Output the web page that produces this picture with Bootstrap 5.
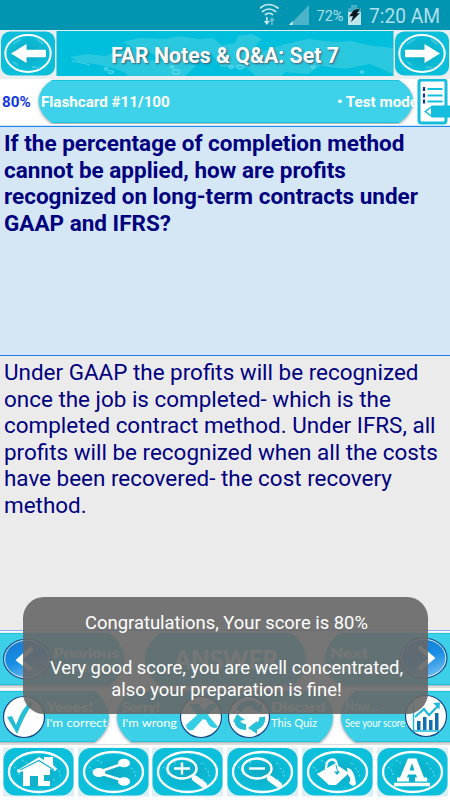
<!DOCTYPE html>
<html lang="en">
<head>
<meta charset="utf-8">
<meta name="viewport" content="width=device-width, initial-scale=1">
<title>FAR Notes &amp; Q&amp;A</title>
<link href="https://cdn.jsdelivr.net/npm/bootstrap@5.3.0/dist/css/bootstrap.min.css" rel="stylesheet">
<style>
body{font-family:Roboto,"Liberation Sans",sans-serif;width:450px;height:800px;overflow:hidden;background:#fff}
.phone{width:450px;height:800px}
svg{display:block;flex:none}
svg text{font-family:Lato,"Open Sans",sans-serif}
.status-bar{height:30px;background:#0295b2;color:#b5dfe8}
.title-bar{height:49px;background:#e9eef0;padding:1px 1px 3px}
.title-box{width:338px;height:45px;background:#00bfdc;border-left:1px solid #8fcbd6;border-right:1px solid #8fcbd6}
.title-text{font-size:21.3px;text-shadow:1px 1px 2px #456}
.info-bar{height:48px;border-bottom:1px solid #1e88f5;box-shadow:inset 0 -1px #d7e5f4}
.info-text{font-size:15.2px;line-height:47px}
.pct{width:41px;padding-left:2px;color:#1238e0}
.mode-text{margin-right:32px}
.q-pane{height:229px;background:#d5e7f5;border-bottom:1px solid #1b82e0;color:#00007f;font-size:22.5px;line-height:26.6px;padding:3px 4px}
.a-pane{height:274px;background:#ebebeb;color:#00007f;font-size:22.45px;line-height:26.6px;padding:3px 4px}
.dock{height:54px;background:#fff}
.toast-box{left:23px;top:597px;width:405px;height:117px;border-radius:21px;background:rgba(103,103,103,.9);color:#fff;font-size:18.4px;line-height:22.3px;padding:15px 0 0 2px}
.ln{display:block;white-space:nowrap}
</style>
<script src="https://cdn.jsdelivr.net/npm/bootstrap@5.3.0/dist/js/bootstrap.bundle.min.js"></script>
</head>
<body>
<svg width="0" height="0" class="position-absolute">
  <defs>
    <radialGradient id="sea"><stop offset="0" stop-color="#0fa9c4"/><stop offset="1" stop-color="#09bfda"/></radialGradient>
    <linearGradient id="ball" x1="0" y1="0" x2=".4" y2="1"><stop offset="0" stop-color="#1577d3"/><stop offset=".6" stop-color="#178ee4"/><stop offset="1" stop-color="#62b4f0"/></linearGradient>
    <filter id="sh" x="-5%" y="-10%" width="110%" height="125%"><feDropShadow dx="0" dy="1" stdDeviation="1.8" flood-color="#555" flood-opacity=".65"/></filter>
    <g id="tile">
      <rect x="3" y="1.5" width="71" height="49" fill="#dceff5"/>
      <rect x="3.5" y="2" width="70" height="47.5" rx="12" fill="#0cc0dc"/>
      <ellipse cx="38.5" cy="26" rx="29.5" ry="20" fill="url(#sea)" stroke="#fff" stroke-width="2.3"/>
      <path d="M14 21l3 2 2 5 2 1M56 22l3 3 2 7M52 17l4 2M22 14l5 3M53 33l3 2" fill="none" stroke="#5bd3e7" stroke-width="1.3" stroke-dasharray="2 2"/>
    </g>
    <g id="navtile">
      <rect x="0" y=".5" width="54" height="44" rx="9" fill="#0bbfdb"/>
      <ellipse cx="27" cy="22.5" rx="22.7" ry="18.5" fill="url(#sea)" stroke="#fff" stroke-width="2"/>
      <path d="M12 13l8-5M36 8l6 5M31 36l8 1M12 31l5 3" stroke="#3cc7dd" stroke-width="2" fill="none"/>
    </g>
  </defs>
</svg>

<main class="phone d-flex flex-column position-relative">
  <header class="status-bar d-flex align-items-center justify-content-end">
    <svg width="190" height="30" viewBox="260 0 190 30">
      <g fill="none" stroke="#c5e8ef" stroke-width="1.7" stroke-linecap="round">
        <path d="M260 8q8.500-7 18 0M262.500 11.500q6.500-5 13 0M265.500 14.500q3.500-2.500 7 0"/>
      </g>
      <path d="M266 17v4h-2.200l3 4 3-4h-2.200v-4z" fill="#c5e8ef"/><path d="M271 25v-4h-2l3-4 3 4h-2.200v4z" fill="#69bccd"/>
      <path d="M309 5v20h-19.500z" fill="#4bb4c8"/><path d="M292.500 21v4h-3.500z" fill="#d7f1f6"/>
      <text x="316.500" y="20.500" font-size="15.500" fill="#b0dfe9" textLength="27" lengthAdjust="spacingAndGlyphs" style="font-family:Roboto">72%</text>
      <path d="M348 8h3V5.500h6V8h4v17h-13z" fill="#bfe4ec"/><path d="M348 8h3V5.500h6V8h4v4h-13z" fill="#3faec5"/>
      <path d="M354 10l6-1.500-3 5 3-.5-9 9 2-6-4 .5z" fill="#071a20"/>
      <text x="369" y="23" font-size="20.500" fill="#b0dfe9" textLength="71" lengthAdjust="spacingAndGlyphs" style="font-family:Roboto">7:20 AM</text>
    </svg>
  </header>

  <nav class="title-bar d-flex align-items-center">
    <svg width="55" height="45" viewBox="0 0 55 45"><use href="#navtile"/><path d="M10 22.500L25.500 13v5.800h18.500q1 0 1 1v5.400q0 1-1 1H25.500V32z" fill="#fff"/></svg>
    <div class="title-box position-relative d-flex align-items-center justify-content-center">
      <svg class="position-absolute top-0 start-0" width="336" height="45" viewBox="0 0 336 45">
        <g fill="#29c8df">
          <path d="M13 26l18-3 18 2 9-4 18-3 7 7 7 12 7 2-6 6H74l-10-5-12-4-14-3-16-2z"/>
          <path d="M66 11l16-4 25 1 16-3 18 3 15-1 11 9-15 7-14 2-7 9-23-4-18-10-11-1z"/>
          <path d="M154 22l7-7 17-3 3-7 14-2 10 5-7 7 9 5 22-7 22-5 28 3 15-1 16 4 26 3v26l-23-10-25 5-25-3-12 8-23-2-6 7h-20l-12-11-26-1z"/>
          <path d="M70 27l40 4 30 3-12 11H70z"/>
        </g>
        <path d="M15 30l10 2 8 2" stroke="#5ad5e7" stroke-width=".8" fill="none"/>
        <g fill="none" stroke="#7ee0ed" stroke-width=".9"><ellipse cx="49" cy="38" rx="2" ry="1.300"/><ellipse cx="54" cy="41" rx="2.500" ry="1.500"/><ellipse cx="119" cy="41" rx="4" ry="2.300"/><ellipse cx="115" cy="36" rx="2" ry="1.200"/><ellipse cx="183" cy="36" rx="3.500" ry="2"/><ellipse cx="174" cy="36" rx="2" ry="1.500"/><ellipse cx="256" cy="36" rx="2" ry="1.200"/><ellipse cx="305" cy="41" rx="2" ry="1.200"/></g>
      </svg>
      <h1 class="title-text position-relative m-0 pt-1 fw-bold text-white text-nowrap">FAR Notes &amp; Q&amp;A: Set 7</h1>
    </div>
    <svg width="55" height="45" viewBox="0 0 55 45"><use href="#navtile" x="1"/><path d="M46 22.500L30.500 13v5.800H12q-1 0-1 1v5.400q0 1 1 1h18.500V32z" fill="#fff"/></svg>
  </nav>

  <section class="info-bar info-text d-flex position-relative fw-bold">
    <svg class="position-absolute top-0 start-0" width="450" height="45" viewBox="0 0 450 45"><path d="M52 1H399Q412 9 413.500 22Q412 35 399 44H52Q39 35 38.500 22Q39 9 52 1Z" fill="#3dd2e9" filter="url(#sh)"/><path d="M52 1.500H399M52 43.500H399" stroke="#17c6e1"/></svg>
    <span class="pct position-relative">80%</span>
    <span class="position-relative text-white">Flashcard #11/100</span>
    <span class="mode-text position-relative text-white ms-auto">• Test mode</span>
    <svg class="position-absolute top-0 end-0" width="34" height="46" viewBox="416 79 34 46">
      <rect x="419" y="80" width="27" height="43" rx="2.500" fill="#fff" stroke="#14bedc" stroke-width="3"/>
      <path d="M427.500 89h15M427.500 95.500h15M427.500 101.500h15" stroke="#13bfdd" stroke-width="2"/>
      <path d="M424 87v4M424 93.500v4M424 99.500v4" stroke="#15338d" stroke-width="2.200"/>
      <path d="M424 111.500l8-6h18v12h-18z" fill="#14bedc"/><path d="M426.500 111.500l4.500-3.500v7z" fill="#fff"/>
    </svg>
  </section>

  <section class="q-pane fw-bold">
    <span class="ln">If the percentage of completion method</span><span class="ln">cannot be applied, how are profits</span><span class="ln">recognized on long-term contracts under</span><span class="ln">GAAP and IFRS?</span>
  </section>

  <section class="a-pane">
    <span class="ln">Under GAAP the profits will be recognized</span><span class="ln">once the job is completed- which is the</span><span class="ln">completed contract method. Under IFRS, all</span><span class="ln">profits will be recognized when all the costs</span><span class="ln">have been recovered- the cost recovery</span><span class="ln">method.</span>
  </section>

  <svg width="450" height="116" viewBox="0 630 450 116">
    <rect y="630" width="450" height="116" fill="#fff"/>
    <rect y="629" width="450" height="2" fill="#82acf5"/>
    <g fill="#3bd0e7" filter="url(#sh)">
      <path d="M-6 633H109Q124 645 124 659Q124 674 109 685H-6z"/>
      <path d="M160 633H292Q306 645 306 659Q306 674 292 685H160Q145 674 145 659Q145 645 160 633z"/>
      <path d="M456 633H340Q325 645 325 659Q325 674 340 685H456z"/>
      <path d="M-6 691H95Q109 703 109 717Q109 731 95 742H-6z"/>
      <path d="M131 691H320Q333 703 333 717Q333 731 320 742H131Q117 731 117 717Q117 703 131 691z"/>
      <path d="M456 691H355Q341 703 341 717Q341 731 355 742H456z"/>
    </g>
    <path d="M0 633.500H109M340 633.500H450M0 684.500H109M340 684.500H450M0 691.500H95M131 691.500H320M355 691.500H450M0 741.500H95M131 741.500H320M355 741.500H450" stroke="#18c6e2"/>
    <path d="M0 687.500H450M0 744.500H450" stroke="#d9dfe1"/>
    <path d="M225.500 691v51" stroke="#33cbe3"/>
    <g fill="#fff" font-weight="900">
      <text x="53" y="658" font-size="13.500" textLength="66" lengthAdjust="spacingAndGlyphs">Previous</text><text x="62" y="672" font-size="11" font-weight="400" textLength="52">Flashcard</text>
      <text x="174" y="669" font-size="26" textLength="104" lengthAdjust="spacingAndGlyphs">ANSWER</text>
      <text x="330" y="658" font-size="13.500" textLength="38" lengthAdjust="spacingAndGlyphs">Next</text><text x="330" y="672" font-size="11" font-weight="400" textLength="49">Flashcard</text>
      <text x="46" y="712" font-size="13.500" textLength="47" lengthAdjust="spacingAndGlyphs">Yeees!</text>
      <text x="122" y="712" font-size="13.500" textLength="38" lengthAdjust="spacingAndGlyphs">Sorry!</text>
      <text x="271" y="712" font-size="13.500" textLength="54" lengthAdjust="spacingAndGlyphs">Discard</text>
      <text x="345" y="711" font-size="13" font-weight="400" textLength="33" lengthAdjust="spacingAndGlyphs">Now...</text>
      <g font-weight="400" font-size="11.800">
        <text x="46" y="727" textLength="61" lengthAdjust="spacingAndGlyphs">I'm correct</text>
        <text x="122" y="727" textLength="55" lengthAdjust="spacingAndGlyphs">I'm wrong</text>
        <text x="271" y="727" textLength="46" lengthAdjust="spacingAndGlyphs">This Quiz</text>
        <text x="345" y="727" textLength="60" lengthAdjust="spacingAndGlyphs">See your score</text>
      </g>
    </g>
    <g fill="url(#ball)" stroke="#1b4f91" stroke-width="1.200"><ellipse cx="27" cy="659" rx="23.500" ry="20"/><ellipse cx="423.500" cy="658" rx="23.500" ry="20"/></g>
    <g fill="none" stroke="#d9edf9" stroke-width="1"><ellipse cx="27" cy="659" rx="22.300" ry="18.800"/><ellipse cx="423.500" cy="658" rx="22.300" ry="18.800"/></g>
    <path d="M32 648L19 660L32 670M419 647L432 658L419 669" fill="none" stroke="#fff" stroke-width="4.500"/>
    <g fill="#fff" stroke="#17468a" stroke-width="1.200"><circle cx="24" cy="717" r="20.500"/><circle cx="201" cy="717" r="20.500"/><circle cx="249" cy="717" r="20.500"/><circle cx="426" cy="716" r="20.500"/></g>
    <path d="M7 717l5-1 4 9q6-17 15-24l2 2q-9 13-16 31z" fill="#23bdd5"/>
    <path d="M186 725l11-10-8-11h10l5 6 6-6h9l-11 11 10 12q-7 4-12-7l-3-1-10 11q-6 2-7-5z" fill="#35cde4"/>
    <g fill="none" stroke="#27c1d8" stroke-width="6">
      <path d="M239 711q3-7 10-8 5 0 7 3M246 727q-8 0-9-7M262 717q1 7-6 10"/>
    </g>
    <path d="M251 709l11-6v10zM233 722l4-8 8 6zM257 721v13l-9-6z" fill="#27c1d8"/>
    <path d="M413.500 702v29h27" fill="none" stroke="#19b9db" stroke-width="1.400"/>
    <path d="M417 721h3.500v9H417zM423 717h3.500v13H423zM429 720h3.500v10H429zM435 713h3.500v17H435z" fill="#126fae"/>
    <path d="M415 717l9-8 5 6 9-9" fill="none" stroke="#21b8da" stroke-width="2.200"/><path d="M433 703l7-.5-.5 7z" fill="#21b8da"/>
  </svg>

  <footer class="dock d-flex">
    <svg width="75" height="54" viewBox="0 0 75 54"><use href="#tile"/><path d="M17 24.500L39 11l5 3v-3h9v8l4 4-2 2-5-2v17H23V25l-5 2z" fill="#fff"/><path d="M20 24L39 14.500 54 24" fill="none" stroke="#12b1ca" stroke-width="1.200"/><path d="M30 30h8v11h-8zM44 29h8v6h-8z" fill="#12b1ca"/></svg>
    <svg width="75" height="54" viewBox="0 0 75 54"><use href="#tile"/><path d="M50 17L22 26.500 50 35" fill="none" stroke="#fff" stroke-width="2.500"/><g fill="#fff"><ellipse cx="49" cy="17" rx="6" ry="4.300"/><ellipse cx="24" cy="26.500" rx="6.300" ry="4.500"/><ellipse cx="49" cy="35.500" rx="6" ry="4.300"/></g></svg>
    <svg width="75" height="54" viewBox="0 0 75 54"><use href="#tile" x="-1"/><ellipse cx="32" cy="22.500" rx="14.500" ry="10" fill="none" stroke="#fff" stroke-width="2.500"/><path d="M24 22.500h16M32 16.500v12" stroke="#fff" stroke-width="2.400"/><path d="M42 29l4 3" stroke="#fff" stroke-width="2"/><path d="M45 32.500l9 6.500" stroke="#fff" stroke-width="6" stroke-linecap="round"/></svg>
    <svg width="75" height="54" viewBox="0 0 75 54"><use href="#tile" x="-1"/><ellipse cx="32" cy="22.500" rx="14.500" ry="10" fill="none" stroke="#fff" stroke-width="2.500"/><path d="M24 22.500h16" stroke="#fff" stroke-width="2.400"/><path d="M42 29l4 3" stroke="#fff" stroke-width="2"/><path d="M45 32.500l9 6.500" stroke="#fff" stroke-width="6" stroke-linecap="round"/></svg>
    <svg width="75" height="54" viewBox="0 0 75 54"><use href="#tile" x="-1"/><path d="M17 28L35 17.500 49 27 36 39H29z" fill="#fff"/><path d="M26 23Q26 13 33 13.500Q38 14 37 26" fill="none" stroke="#fff" stroke-width="2.300"/><path d="M36 19q1 6 3 8" fill="none" stroke="#11afca" stroke-width="1"/><path d="M34 25.500h6L37 29z" fill="#11afca"/><path d="M47 22q7 0 9 16-3 4-7-1 3-4-1-8z" fill="#fff"/></svg>
    <svg width="75" height="54" viewBox="0 0 75 54"><use href="#tile" x="-1"/><path d="M22 35.500v-4h3L33 12.500h8.500L49 31.500h3v4H40v-4h2l-1-3h-8l-1 3h2v4zM34.500 24.500h5L37 17z" fill="#fff" fill-rule="evenodd"/><path d="M19 38.500h36" stroke="#fff" stroke-width="3.500"/></svg>
  </footer>

  <aside class="toast-box position-absolute text-center">Congratulations, Your score is 80%<br><br>Very good score, you are well concentrated,<br>also your preparation is fine!</aside>
</main>
</body>
</html>
